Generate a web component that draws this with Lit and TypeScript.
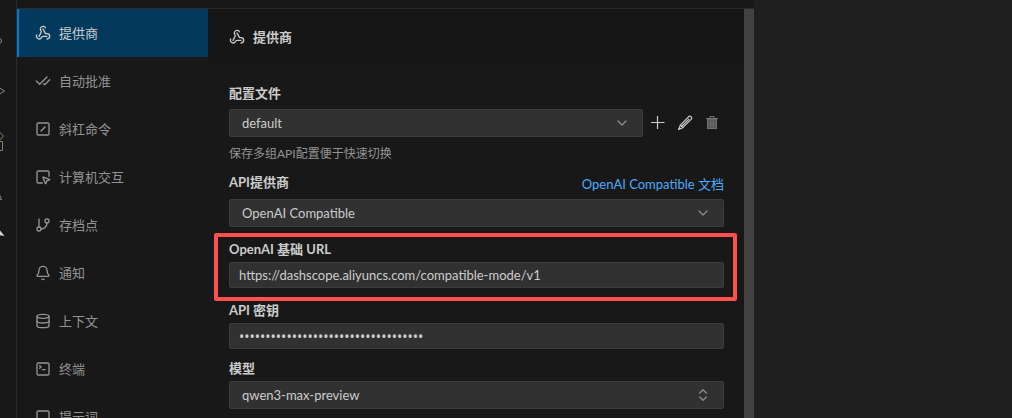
import { LitElement, html, css, svg } from "lit";
import { customElement, state } from "lit/decorators.js";

const icons = {
  webhook: svg`<path d="M18 16.98h-5.99c-1.1 0-1.95.94-2.48 1.9A4 4 0 0 1 2 17c.01-.7.2-1.4.57-2"/><path d="m6 17 3.13-5.78c.53-.97.1-2.18-.5-3.1a4 4 0 1 1 6.89-4.06"/><path d="m12 6 3.13 5.73C15.66 12.7 16.9 13 18 13a4 4 0 0 1 0 8"/>`,
  checks: svg`<path d="M18 6 7 17l-5-5"/><path d="m22 10-7.5 7.5L13 16"/>`,
  slash: svg`<rect x="3" y="3" width="18" height="18" rx="2"/><path d="m9 15 6-6"/>`,
  pointer: svg`<path d="M12.034 12.681a.498.498 0 0 1 .647-.647l9 3.5a.5.5 0 0 1-.033.943l-3.444 1.068a1 1 0 0 0-.66.66l-1.067 3.443a.5.5 0 0 1-.943.033z"/><path d="M21 11V5a2 2 0 0 0-2-2H5a2 2 0 0 0-2 2v14a2 2 0 0 0 2 2h6"/>`,
  branch: svg`<path d="M6 3v12"/><circle cx="18" cy="6" r="3"/><circle cx="6" cy="18" r="3"/><path d="M18 9a9 9 0 0 1-9 9"/>`,
  bell: svg`<path d="M10.268 21a2 2 0 0 0 3.464 0"/><path d="M3.262 15.326A1 1 0 0 0 4 17h16a1 1 0 0 0 .74-1.673C19.41 13.956 18 12.499 18 8A6 6 0 0 0 6 8c0 4.499-1.411 5.956-2.738 7.326"/>`,
  database: svg`<ellipse cx="12" cy="5" rx="9" ry="3"/><path d="M3 5v14a9 3 0 0 0 18 0V5"/><path d="M3 12a9 3 0 0 0 18 0"/>`,
  terminal: svg`<path d="m7 11 2-2-2-2"/><path d="M11 13h4"/><rect x="3" y="3" width="18" height="18" rx="2"/>`,
  message: svg`<path d="M21 15a2 2 0 0 1-2 2H7l-4 4V5a2 2 0 0 1 2-2h14a2 2 0 0 1 2 2z"/>`,
  down: svg`<path d="m6 9 6 6 6-6"/>`,
  upDown: svg`<path d="m7 15 5 5 5-5"/><path d="m7 9 5-5 5 5"/>`,
};

const icon = (shape: unknown) =>
  html`<svg class="icon" viewBox="0 0 24 24" aria-hidden="true">${shape}</svg>`;

const sections = [
  { label: "提供商", shape: icons.webhook },
  { label: "自动批准", shape: icons.checks },
  { label: "斜杠命令", shape: icons.slash },
  { label: "计算机交互", shape: icons.pointer },
  { label: "存档点", shape: icons.branch },
  { label: "通知", shape: icons.bell },
  { label: "上下文", shape: icons.database },
  { label: "终端", shape: icons.terminal },
  { label: "提示词", shape: icons.message },
];

@customElement("app-root")
export class AppRoot extends LitElement {
  @state() private active = 0;

  static styles = css`
    :host {
      display: flex;
      height: 100vh;
      overflow: hidden;
      background: #1f1f1f;
      color: #cccccc;
      font: 13px/20px Lato, "Noto Sans CJK SC", sans-serif;
    }
    * { box-sizing: border-box; }
    button, select, input { font: inherit; color: inherit; margin: 0; }
    .icon {
      width: 16px;
      height: 16px;
      flex: none;
      fill: none;
      stroke: currentColor;
      stroke-width: 2;
      stroke-linecap: round;
      stroke-linejoin: round;
    }
    .activity {
      flex: none;
      width: 17px;
      background: #181818;
      border-right: 1px solid #2b2b2b;
    }
    .activity svg { display: block; width: 16px; height: 240px; fill: none; stroke: #868686; }
    .panel {
      flex: 737 1 0;
      min-width: 0;
      display: flex;
      flex-direction: column;
      background: #181818;
      padding-top: 8px;
    }
    .editor { flex: 258 1 0; }
    .settings { flex: 1; min-height: 0; display: flex; border-top: 1px solid #2b2b2b; }
    .nav { flex: none; width: 191px; overflow: hidden; }
    .tab {
      display: flex;
      align-items: center;
      gap: 8px;
      width: 100%;
      height: 48px;
      padding: 0 16px;
      border: 0;
      border-left: 2px solid transparent;
      background: none;
      color: #949494;
      text-align: left;
    }
    .tab.active { background: #04395e; border-left-color: #0078d4; color: #cccccc; }
    .content { flex: 1; min-width: 0; overflow: hidden; }
    .header {
      display: flex;
      align-items: center;
      gap: 8px;
      height: 56px;
      padding: 0 21px;
      background: #161616;
    }
    .title { margin: 0; font-size: 13px; font-weight: 700; }
    .form { padding: 19px 20px 18px 21px; }
    .scrollbar { flex: none; width: 10px; background: #424242; }
    .label { display: block; font-weight: 700; line-height: 18px; }
    .head { display: flex; justify-content: space-between; align-items: center; height: 18px; margin-bottom: 7px; }
    .head.linked { margin-bottom: 8px; }
    .link { color: #4daafc; text-decoration: none; padding-top: 4px; }
    .row { display: flex; align-items: center; gap: 7px; }
    .picker { position: relative; flex: 1; min-width: 0; display: flex; }
    .picker .icon { position: absolute; right: 13px; top: 6px; color: #8a8a8a; pointer-events: none; }
    .select, .input {
      width: 100%;
      border: 1px solid #3c3c3c;
      border-radius: 2px;
      background: #313131;
      appearance: none;
      outline: 0;
    }
    .select { height: 28px; padding: 0 32px 0 12px; }
    .input { display: block; height: 26px; padding: 0 9px; }
    .secret { font-family: "Noto Sans", sans-serif; font-size: 14px; }
    .actions { display: flex; gap: 11px; padding-right: 4px; }
    .action { display: flex; padding: 0; border: 0; background: none; }
    .action svg { width: 16px; height: 16px; fill: none; stroke: #cccccc; }
    .action:disabled { opacity: 0.5; }
    .hint { margin: 8px 0 10px; font-size: 12px; line-height: 18px; color: #949494; }
    .field { position: relative; margin-top: 13px; }
    .field .label { margin-bottom: 4px; }
    .field.compact { margin-top: 10px; }
    .marked::after {
      content: "";
      position: absolute;
      inset: -7px -13px -13px -15px;
      border: 4px solid #ff5050;
      border-radius: 2px;
      pointer-events: none;
    }
  `;

  render() {
    return html`
      <aside class="activity" aria-hidden="true">
        <svg viewBox="0 0 16 240">
          <path d="M-3 38.500h2a2.500 2.500 0 0 1 0 5h-3"/>
          <path d="M-2 87l6.500 4-6.500 4"/>
          <path d="M-1 131.500l4.500 4.500-4.500 5M-4 141.500h6.500v9H-4" stroke="#7f8470"/>
          <path d="M-4 199.500h5.500l-2.500-6" stroke="#8d7f72"/>
          <path d="M0 230.500l4.500 5.500-5.500-1z" fill="#d7d7d7" stroke="none"/>
        </svg>
      </aside>
      <main class="panel">
        <div class="settings">
          <nav class="nav">
            ${sections.map(
              (s, i) => html`<button
                class="tab ${i === this.active ? "active" : ""}"
                @click=${() => (this.active = i)}
              >${icon(s.shape)}<span>${s.label}</span></button>`,
            )}
          </nav>
          <section class="content">
            <header class="header">
              ${icon(sections[this.active].shape)}
              <h1 class="title">${sections[this.active].label}</h1>
            </header>
            <form class="form">
              <div class="head"><label class="label" for="profile">配置文件</label></div>
              <div class="row">
                <div class="picker">
                  <select class="select" id="profile"><option>default</option></select>
                  ${icon(icons.down)}
                </div>
                <div class="actions">
                  <button class="action" type="button" aria-label="添加">
                    <svg viewBox="0 0 16 16"><path d="M7.500 1v13M1 7.500h13.500" stroke-width="1.200"/></svg>
                  </button>
                  <button class="action" type="button" aria-label="重命名">
                    <svg viewBox="0 0 16 16"><path d="M11.500 1.800c.9-.8 1.900-.7 2.600 0s.8 1.700 0 2.600L5.800 12.700 1.600 14.400 3.300 10.100zM3.300 10.100l2.500 2.600M5 11l7.200-7.200" stroke-width="1.200" stroke-linejoin="round"/></svg>
                  </button>
                  <button class="action" type="button" aria-label="删除" disabled>
                    <svg viewBox="0 0 16 16"><path d="M3.500 4v9.500h9V4z" fill="#9a9a9a"/><path d="M2 3.500h12M6 3V1.500h4V3M3.500 4v9.500h9V4M6.500 5.500v6.500M9.500 5.500v6.500"/></svg>
                  </button>
                </div>
              </div>
              <p class="hint">保存多组API配置便于快速切换</p>
              <div class="head linked">
                <label class="label" for="provider">API提供商</label>
                <a class="link" href="#docs">OpenAI Compatible 文档</a>
              </div>
              <div class="picker">
                <select class="select" id="provider"><option>OpenAI Compatible</option></select>
                ${icon(icons.down)}
              </div>
              <div class="field marked">
                <label class="label" for="url">OpenAI 基础 URL</label>
                <input class="input" id="url" type="text" value="https://dashscope.aliyuncs.com/compatible-mode/v1" />
              </div>
              <div class="field">
                <label class="label" for="key">API 密钥</label>
                <input class="input secret" id="key" type="password" autocomplete="off" value="00000000000000000000000000000000000" />
              </div>
              <div class="field compact">
                <label class="label" for="model">模型</label>
                <div class="picker">
                  <select class="select" id="model"><option>qwen3-max-preview</option></select>
                  ${icon(icons.upDown)}
                </div>
              </div>
            </form>
          </section>
          <div class="scrollbar"></div>
        </div>
      </main>
      <div class="editor"></div>
    `;
  }
}
